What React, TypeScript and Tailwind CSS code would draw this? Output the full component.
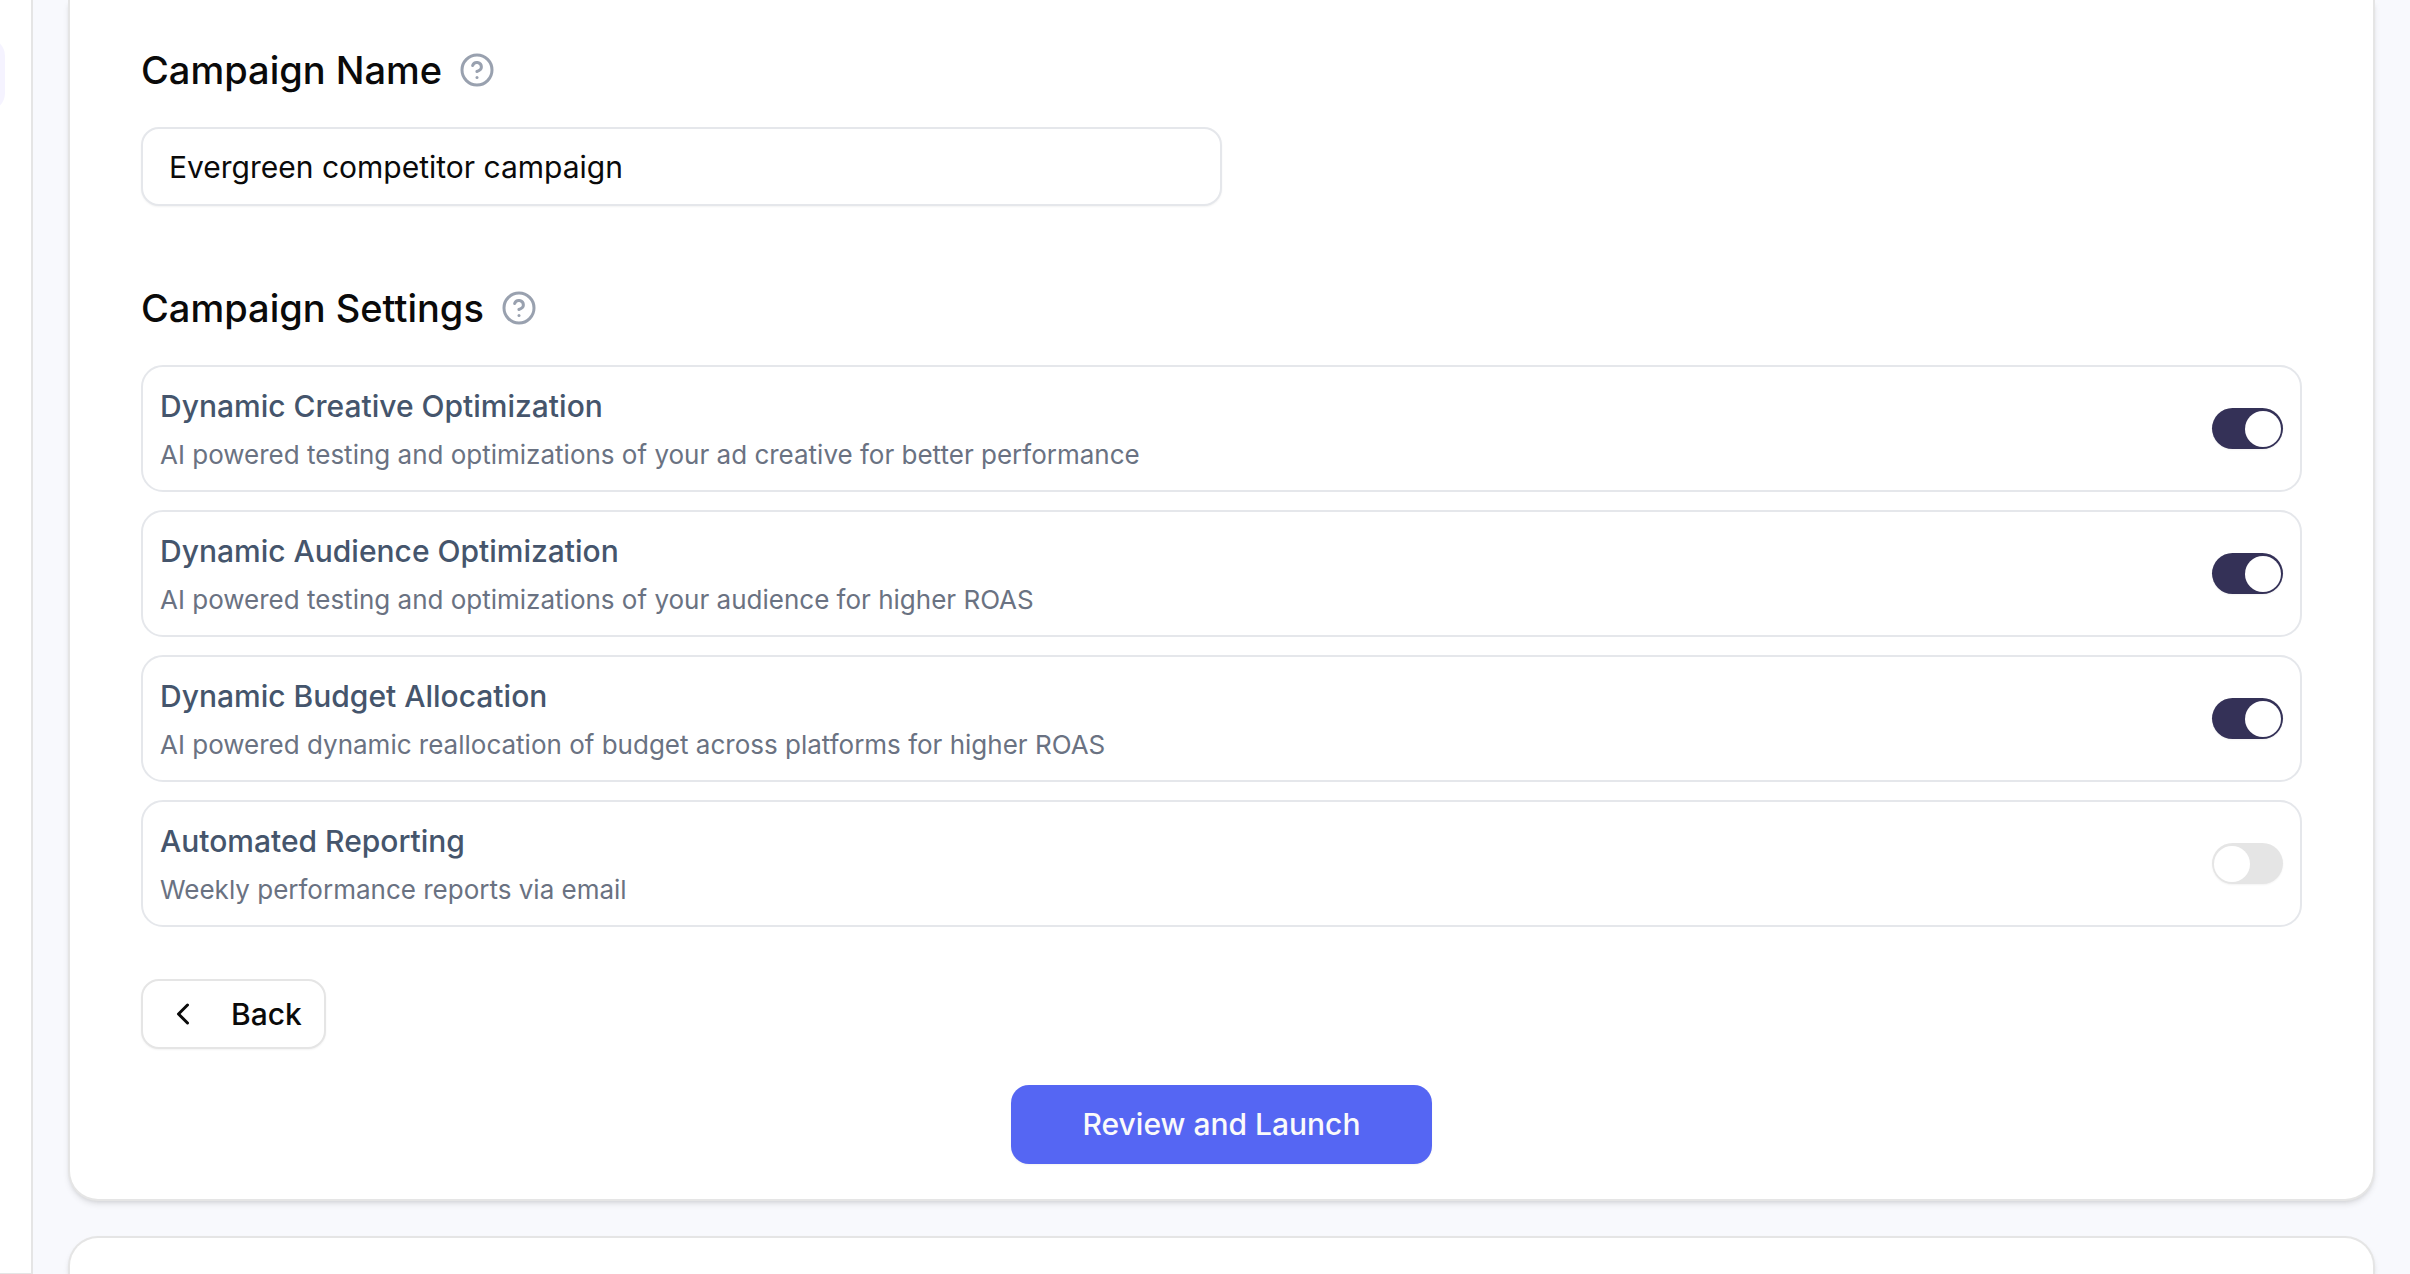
import { useState } from 'react';
import { ChevronLeft, CircleHelp } from 'lucide-react';

interface Setting {
  id: string;
  title: string;
  description: string;
  enabled: boolean;
}

const SETTINGS: Setting[] = [
  {
    id: 'creative',
    title: 'Dynamic Creative Optimization',
    description: 'AI powered testing and optimizations of your ad creative for better performance',
    enabled: true,
  },
  {
    id: 'audience',
    title: 'Dynamic Audience Optimization',
    description: 'AI powered testing and optimizations of your audience for higher ROAS',
    enabled: true,
  },
  {
    id: 'budget',
    title: 'Dynamic Budget Allocation',
    description: 'AI powered dynamic reallocation of budget across platforms for higher ROAS',
    enabled: true,
  },
  {
    id: 'reporting',
    title: 'Automated Reporting',
    description: 'Weekly performance reports via email',
    enabled: false,
  },
];

function HelpButton({ label }: { label: string }) {
  return (
    <button type="button" aria-label={label} className="text-gray-400">
      <CircleHelp size={36} />
    </button>
  );
}

function SettingRow({ setting, onToggle }: { setting: Setting; onToggle: () => void }) {
  return (
    <div className="flex items-center justify-between rounded-[22px] border-2 border-gray-200 px-[17px]">
      <div className="pt-[14px] pb-[11px]">
        <label htmlFor={setting.id} className="block text-[30px] leading-[50px] font-medium text-slate-600">
          {setting.title}
        </label>
        <p id={`${setting.id}-desc`} className="text-[26px] leading-[48px] text-gray-500">
          {setting.description}
        </p>
      </div>
      <input
        id={setting.id}
        type="checkbox"
        role="switch"
        aria-describedby={`${setting.id}-desc`}
        checked={setting.enabled}
        onChange={onToggle}
        className="flex h-[41px] w-[71px] shrink-0 cursor-pointer appearance-none items-center rounded-full bg-neutral-200 px-[2px] shadow-xs before:size-9 before:rounded-full before:bg-white checked:justify-end checked:bg-[#343157]"
      />
    </div>
  );
}

export default function App() {
  const [name, setName] = useState('Evergreen competitor campaign');
  const [settings, setSettings] = useState(SETTINGS);

  const toggle = (id: string) => {
    setSettings(settings.map((s) => (s.id === id ? { ...s, enabled: !s.enabled } : s)));
  };

  return (
    <div className="flex min-h-screen bg-[#f8f9fd] font-['Inter',sans-serif] text-neutral-950">
      <aside className="w-[33px] shrink-0 overflow-hidden border-r-2 border-b border-neutral-200 bg-white pt-[38px]">
        <div className="-ml-[43px] h-[73px] w-12 rounded-[18px] bg-violet-50" />
      </aside>

      <main className="flex flex-1 flex-col gap-[35px] px-[35px]">
        <section className="rounded-b-[30px] border-2 border-t-0 border-neutral-200 bg-white px-[71px] pt-[45px] pb-[35px] shadow-md">
          <div className="flex items-center gap-[17px]">
            <h2 className="text-[38px] leading-[50px] font-medium">
              <label htmlFor="campaign-name">Campaign Name</label>
            </h2>
            <HelpButton label="About the campaign name" />
          </div>
          <input
            id="campaign-name"
            type="text"
            value={name}
            onChange={(e) => setName(e.target.value)}
            className="mt-8 block h-[79px] w-1/2 rounded-[18px] border-2 border-gray-200 bg-white px-[26px] text-[30px] shadow-xs outline-none"
          />

          <div className="mt-[77px] flex items-center gap-[17px]">
            <h2 className="text-[38px] leading-[50px] font-medium">Campaign Settings</h2>
            <HelpButton label="About the campaign settings" />
          </div>
          <div className="mt-8 flex flex-col gap-[18px]">
            {settings.map((s) => (
              <SettingRow key={s.id} setting={s} onToggle={() => toggle(s.id)} />
            ))}
          </div>

          <button
            type="button"
            className="mt-[52px] flex h-[70px] items-center gap-[30px] rounded-[18px] border-2 border-neutral-200 bg-white px-[22px] text-[30px] font-medium shadow-xs"
          >
            <ChevronLeft size={36} />
            Back
          </button>
          <button
            type="button"
            className="mx-auto mt-9 block h-[79px] rounded-[18px] bg-[#5566f3] px-[72px] text-[30px] font-medium text-neutral-50 shadow-xs"
          >
            Review and Launch
          </button>
        </section>

        <section className="flex-1 rounded-t-[30px] border-2 border-b-0 border-neutral-200 bg-white shadow-md" />
      </main>
    </div>
  );
}
